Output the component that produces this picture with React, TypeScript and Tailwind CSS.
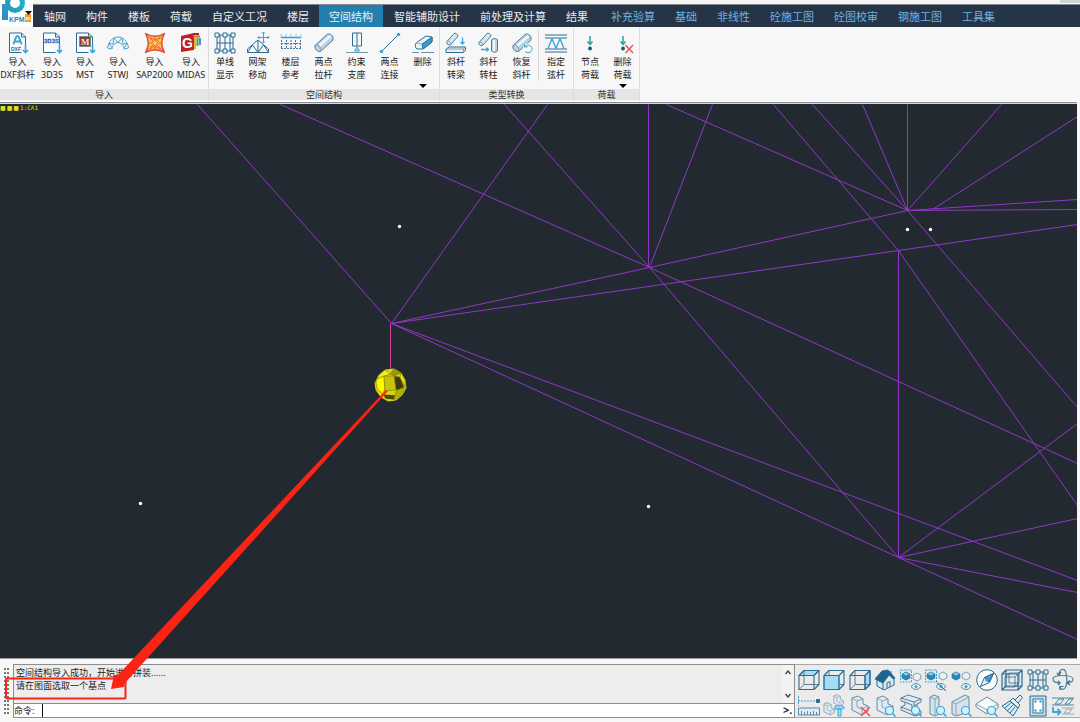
import React from 'react';

const D = '#2a6c92';
const L = '#38a5dc';
const P = '#a5dcf5';

type IconProps = { children: React.ReactNode };

function Icon({ children }: IconProps) {
  return (
    <svg viewBox="0 0 22 22" width="22" height="22" fill="none" stroke={D} strokeWidth="1" strokeLinejoin="round" aria-hidden="true" className="shrink-0 overflow-visible">
      {children}
    </svg>
  );
}

/* ---------- ribbon drawings ---------- */

function Sheet({ children }: IconProps) {
  return (
    <Icon>
      <path d="M2.500 1h12l4 4v9M14.500 20.500H2.500V1" fill="#fbfdfe" />
      <path d="M14.500 1v4h4" />
      {children}
      <path d="M18.500 12.500v8M16 18l2.500 2.700L21 18" stroke={L} strokeWidth="1.600" />
    </Icon>
  );
}

const dxf = (
  <Sheet>
    <path d="M6 12c2-1 2-8 4.500-8S13 11 15 12M8 9.500h5" stroke={L} strokeWidth="2" />
    <text x="4" y="19" fontSize="5" fontWeight="700" fill={D} stroke="none" fontFamily="Liberation Sans, sans-serif">DXF</text>
  </Sheet>
);
const threeD = (
  <Sheet>
    <rect x="3" y="6" width="15" height="6" fill="#d8e9f7" stroke="none" />
    <text x="3" y="11" fontSize="6" fontWeight="700" fill="#324f9d" stroke="none" fontFamily="Liberation Sans, sans-serif">3D3S</text>
  </Sheet>
);
const mst = (
  <Sheet>
    <rect x="5.500" y="4.500" width="11" height="10" fill="#8d3b3b" stroke="#80858a" />
    <text x="7" y="13" fontSize="9" fontWeight="700" fill="#f2e6e2" stroke="none" fontFamily="Liberation Serif, serif">M</text>
  </Sheet>
);
const stwj = (
  <Icon>
    <g stroke="#42a5d8">
      <path d="M.5 16C1.500 9 6 5 11 5s9.500 4 10.500 11" />
      <path d="M5 17c.6-4 3-6.500 6-6.500s5.400 2.500 6 6.500M.5 16 5 17M2 11.500l4 .5 1-6 4 4.500 4-4.500 1 6 4-.5M2 11.500 5 16M20 11.500 17 16M17 17l4.500-1" />
    </g>
  </Icon>
);
const sap = (
  <Icon>
    <path d="M1.500 1.500Q11 7 20.500 1.500 15 11 20.500 20.500 11 15 1.500 20.500 7 11 1.500 1.500Z" fill="#f9bf3f" stroke="#e8413a" strokeWidth="1.400" />
    <path d="m2 2 18 18M20 2 2 20M11 4v14M4 11h14M6 5q5 5 10 0M6 17q5-5 10 0" stroke="#ea5040" strokeWidth=".8" />
    <circle cx="11" cy="11" r="1.500" fill="#fce58c" stroke="none" />
  </Icon>
);
const midas = (
  <Icon>
    <path d="M1 4 14 1v17L1 20Z" fill="#c0202a" stroke="none" />
    <path d="M14 1 21 4v13l-7 1Z" fill="#f4f6f2" stroke="none" />
    <path d="M14 2h5" stroke="#a52028" strokeWidth="2" />
    <path d="M15 6v11" stroke="#e4b92f" strokeWidth="2" />
    <path d="M17.500 6v8" stroke="#4d9b57" strokeWidth="2" />
    <path d="M20 6v7" stroke="#3c6bb8" strokeWidth="1.600" />
    <path d="M13 4.500h7" stroke="#d1682c" strokeWidth="2" />
    <text x="2" y="16" fontSize="14" fontWeight="700" fill="#fff" stroke="none" fontFamily="Liberation Sans, sans-serif">G</text>
  </Icon>
);

const frameGrid = (
  <>
    <path d="M3 3h16v16H3ZM11 3v16M3 11h16M6 3v16M16 3v16" />
    {[3, 11, 19].map((x) =>
      [3, 19].map((y) => <rect key={`${x}-${y}`} x={x - 2} y={y - 2} width="4" height="4" fill="#eef6fa" />),
    )}
  </>
);

const single = <Icon>{frameGrid}</Icon>;
const truss = (
  <Icon>
    <path d="M.5 20.500h21M.5 20.500V17L11 8l10.500 9v3.500M11 8v12.500M11 20.500 5.500 13M11 20.500 16.500 13M.5 20.500l5-7.500M21.500 20.500l-5-7.500" />
    <path d="M16.500 0v11M11 5.500h11M15 1.500 16.500 0 18 1.500M15 9.500l1.500 1.500L18 9.500M12.500 4 11 5.500 12.500 7M20.500 4 22 5.500 20.500 7" stroke={L} />
  </Icon>
);
const floorRef = (
  <Icon>
    <path d="M1 5.500h20" stroke={L} strokeWidth="1.600" />
    <path d="M1 2.500v3M6 2.500v3M11 2.500v3M16 2.500v3M21 2.500v3" stroke={L} strokeDasharray="1 1" />
    <path d="M1 11.500h20M1 16.500h20M1.500 8v9M6.500 8v9M11 8v9M15.500 8v9M20.500 8v9" strokeDasharray="2 1" strokeWidth=".9" />
  </Icon>
);

function Rod() {
  return (
    <>
      <path d="M2 13.500 14 2.500c2-1.500 6 .5 6 3.500v2L8 19c-3 2-7-2-6-5.500Z" fill="#bdd2df" stroke="#4c7e9b" />
      <path d="M2 13.500c2-2 6 1 6 5.500" stroke="#7d9db1" />
      <path d="M6.500 13.500 17.500 4" stroke="#f1f7fa" strokeWidth="2.500" />
    </>
  );
}

const rod = <Icon><Rod /></Icon>;
const support = (
  <Icon>
    <path d="M6.500 1h9v13h-9ZM11 1v13" />
    <path d="M0 20.500h22" stroke="#7198ae" />
    <path d="m11 15-2.500 4h5Z" stroke={L} fill={P} />
  </Icon>
);
const connect = (
  <Icon>
    <path d="M3 19 19 3" />
    <circle cx="2.500" cy="19.500" r="1.800" fill={L} stroke="none" />
    <circle cx="19.500" cy="2.500" r="1.800" fill={L} stroke="none" />
  </Icon>
);
const eraser = (
  <Icon>
    <path d="m4 11 10-7 6 1v5l-9 7H5c-2-1-2-4-1-6Z" fill="#e9f3f8" />
    <path d="m10 12 10-7v5l-9 7Z" fill="#36a0d6" />
    <path d="m4 11 6 1" stroke="#8fb0c2" />
    <path d="M0 20.500h7M9 20.500h13" stroke="#6a8ba0" />
  </Icon>
);
const toBeam = (
  <Icon>
    <path d="M2 9.500 9 1.500c1-1 4 .5 4 2.500L6 12.500c-3 1.500-5-1-4-3Z" fill="#dbe7ee" stroke="#4c7e9b" />
    <path d="M2 9.500c2-1 4 1 4 3" stroke="#7d9db1" />
    <path d="M17.500 5.500v6M15.500 10l2 2 2-2" stroke={L} strokeWidth="1.300" />
    <path d="m1 17 3-2h16.500v3l-2 2.500H1Z" fill="#e7f0f5" />
    <path d="M1 17h17.500l2-2M18.500 17v3.500" stroke="#7d9db1" />
  </Icon>
);
const toColumn = (
  <Icon>
    <path d="M1 10.500 9 1.500c1-1 4 .5 4 2.500L5 13c-3 1.500-5-.5-4-2.500Z" fill="#dbe7ee" stroke="#4c7e9b" />
    <path d="M1 10.500c2-1 4 1 4 2.500" stroke="#7d9db1" />
    <path d="M13.500 8c1-2 6-2 6 0v10c0 3-6 3-6 0Z" fill="#bdd2df" stroke="#4c7e9b" />
    <path d="M16 8v11" stroke="#f1f7fa" strokeWidth="2" />
    <path d="M3 17.500h7M8.500 15.500l2 2-2 2" stroke={L} strokeWidth="1.300" />
  </Icon>
);
const restore = (
  <Icon>
    <Rod />
    <circle cx="17" cy="16.500" r="5" fill="#f7f7f7" stroke="none" />
    <path d="M14 14.500c3-3 7.500-.5 7 3s-5 4-7 2M13.500 12v3h3" stroke={L} />
  </Icon>
);
const chord = (
  <Icon>
    <path d="M0 3h22M0 6h22M0 17h22M0 20h22" strokeWidth="1.200" />
    <path d="m3 16.500 4-10 4 10 4-10 4 10" stroke={L} strokeWidth="1.400" />
  </Icon>
);
const nodeLoad = (
  <Icon>
    <path d="M11 4v8M8.500 9.500l2.500 3 2.500-3" stroke="#2ba1a8" strokeWidth="1.500" />
    <circle cx="11" cy="16.500" r="1.900" fill="#1d5975" stroke="none" />
  </Icon>
);
const delLoad = (
  <Icon>
    <path d="M11 4v8M8.500 9.500l2.500 3 2.500-3" stroke="#2ba1a8" strokeWidth="1.500" />
    <circle cx="11" cy="16.500" r="1.900" fill="#1d5975" stroke="none" />
    <path d="m13.500 13 7.500 8M21 13l-7.500 8" stroke="#ef5350" strokeWidth="1.500" />
  </Icon>
);

/* ---------- view toolbar drawings ---------- */

function WireCube({ face }: { face: 'top' | 'front' | 'side' }) {
  return (
    <Icon>
      {face === 'top' && <path d="M1 6.500 6 1.500h15l-5 5Z" fill={P} />}
      {face === 'side' && <path d="m16 6.500 5-5v14l-5 5Z" fill={P} />}
      <path d="M6 1.500v14h15M6 15.500l-5 5" stroke="#5c7d92" />
      {face === 'front' && <path d="M1 6.500h15v14H1Z" fill={P} stroke={L} />}
      <path d="M1 6.500h15v14H1ZM1 6.500 6 1.500h15v14l-5 5M16 6.500l5-5" strokeWidth="1.100" />
    </Icon>
  );
}

const house = (
  <Icon>
    <path d="m3 10 6 2 6-7 5 5v6l-10 5-7-4Z" fill="#dce8ef" />
    <path d="m1 10 7-8 6-1 7 8-1.500 1L15 6l-6 8Z" fill="#1d6590" />
    <path d="M9 13v8M13 19v-5l3-1.500V18M17 2v3" />
  </Icon>
);

function Eye({ off = false }: { off?: boolean }) {
  return (
    <>
      <path d="M11 17.500q5-6 10 0-5 6-10 0Z" fill="#f4f8fa" stroke="#4c82a0" />
      <circle cx="16" cy="17.500" r="1.600" fill={L} stroke="none" />
      {off && <path d="m11.500 13 9.500 9" />}
    </>
  );
}
function Hex({ x, y, solid = false }: { x: number; y: number; solid?: boolean }) {
  return (
    <g transform={`translate(${x} ${y})`}>
      <path d="M0-4 3.800-2v4L0 4l-3.800-2v-4Z" fill={solid ? '#2589bd' : '#e9f1f5'} stroke={solid ? D : '#6f98af'} strokeWidth=".9" />
      {solid && <path d="m-3.200-2 3.200 1.500L3.200-2 0-3.700Z" fill="#8bd0ef" stroke="none" />}
    </g>
  );
}
const showSel = <Icon><rect x=".5" y="1" width="11" height="12" strokeDasharray="2 1" stroke={L} /><Hex x={6} y={7} solid /><Hex x={17} y={8} /><Eye /></Icon>;
const hideSel = <Icon><rect x=".5" y="1" width="11" height="12" strokeDasharray="2 1" stroke={L} /><Hex x={6} y={7} solid /><Hex x={18} y={7} /><Eye off /></Icon>;
const showAll = <Icon><Hex x={6} y={7} solid /><Hex x={16} y={7} /><Eye /></Icon>;
const compass = (
  <Icon>
    <circle cx="11" cy="11" r="10.300" fill="#fcfdfe" />
    <path d="m17.500 4.500-4 9-9 4 4-9Z" fill="#e7f3f9" />
    <path d="m17.500 4.500-9 4L13 13Z" fill={L} />
    <circle cx="11" cy="11" r="1.200" fill="#fff" />
  </Icon>
);
const doubleCube = (
  <Icon>
    <path d="M1 5 5 1h16v16l-4 4H1ZM1 5h16v16M17 5l4-4M5 1v16h16M5 17l-4 4" strokeWidth="1.200" />
    <path d="M4 8h10v10H4ZM8 4h10v10H8ZM4 8l4-4M14 8l4-4M14 18l4-4" strokeWidth=".8" />
  </Icon>
);
const orbit = (
  <Icon>
    <path d="M7 5c1-6 6-6 7-1 1 5 1 12-1 15-2 2.500-5 1-5-1" stroke="#4f7d97" strokeWidth="1.200" />
    <path d="M8 14c-4 0-7-1-7-4s5-3.500 9-3.500 11 0 11 4c0 2-2 3-6 3.300" stroke="#4f7d97" strokeWidth="1.200" />
    <path d="m5 4 2 2 2-3M8 21v-3.500h3.500M18 11.500l-3 2.300 3 2.200M6 12l2 2-2 2" strokeWidth="1.200" />
  </Icon>
);
const ruler = (
  <Icon>
    <path d="M.5 1v10M0 6h17" stroke={L} strokeDasharray="2 1" />
    <rect x="18.500" y="4.500" width="3" height="3" fill={D} />
    <path d="M.5 13h21v7H.5Z" fill="#ddebf3" stroke="#5b8ba6" />
    <path d="M3.500 16v4M6.500 17v3M9.500 16v4M12.500 17v3M15.500 16v4M18.500 17v3" stroke="#5b8ba6" />
  </Icon>
);
const block = <path d="m3 3 6-2 5 3v5l5 2v5l-6 4-10-5Z" fill="#e1eaf0" stroke="#6b8a9d" />;
const blockLines = <path d="m3 3 5 3 6-2M8 6v6l5 2 6-3M13 14v6" stroke="#8aa4b3" />;
function Lens() {
  return (
    <>
      <circle cx="15.500" cy="15.500" r="4" fill="#d5f1fc" stroke={L} strokeWidth="1.200" />
      <path d="m18.500 18.500 3 3" stroke={L} strokeWidth="1.500" />
    </>
  );
}
const paint = (
  <Icon>
    <g transform="translate(9 -1) scale(.6)">{block}{blockLines}</g>
    <g transform="translate(-1 7) scale(.65)">{block}{blockLines}</g>
    <path d="M12 11h8l1.500 2.500M12 11v3h8v-3M15 14h3v7h-3Z" stroke={L} fill={P} />
  </Icon>
);
const blockDel = <Icon>{block}{blockLines}<path d="m12 12 9 9M21 12l-9 9" stroke="#ef5350" strokeWidth="1.500" /></Icon>;
const blockFind = <Icon>{block}{blockLines}<Lens /></Icon>;
const beamFind = (
  <Icon>
    <path d="m1 3 7-3 13 4v3l-4 2v5l4 2v3l-6 2-14-6v-3l4-2V7L1 6Z" fill="#dfe9ef" stroke="#55809a" />
    <path d="m1 3 13 4 7-3M14 7v4l3-2M5 7l7 3v6M1 12l13 5v4" stroke="#55809a" />
    <Lens />
  </Icon>
);
const colFind = (
  <Icon>
    <path d="m5 2 4-2 5 2v17l-4 2-5-2Z" fill="#d6e3eb" stroke="#6b8a9d" />
    <path d="m5 2 5 2 4-2M10 4v17" stroke="#8aa4b3" />
    <Lens />
  </Icon>
);
const wallFind = (
  <Icon>
    <path d="M2 7 15 0l4 2v15L6 21l-4-2Z" fill="#d6e3eb" stroke="#6b8a9d" />
    <path d="m2 7 4 2 13-7M6 9v12" stroke="#8aa4b3" />
    <Lens />
  </Icon>
);
const slabFind = (
  <Icon>
    <path d="M0 9 11 2l11 7v4l-11 6L0 12Z" fill="#f4f8fa" stroke="#6b8a9d" />
    <path d="m0 9 11 6 11-6M11 15v4" stroke="#8aa4b3" />
    <Lens />
  </Icon>
);
const brush = (
  <Icon>
    <path d="m1 11 8-5 8 7-5 8Z" fill="#d5effa" />
    <path d="m9 6 3-3 7 7-2 3ZM14 5l5-5 2.500 2.500L17 8M4 13l7-6M6 16l6-6M9 18l5-6" />
  </Icon>
);
const plate = (
  <Icon>
    <path d="M3 1h16v20H3Z" fill="#c7dfec" />
    <path d="M6 4h10v14H6Z" fill="#fff" />
    {[8.5, 13.5].map((x) => [6.5, 15.5].map((y) => <circle key={`${x}-${y}`} cx={x} cy={y} r="1.200" fill={L} stroke="none" />))}
  </Icon>
);
const swap = (
  <Icon>
    <path d="M0 3h22M0 10h22M3 9l4-5h5L8 9ZM13 9l4-5h4l-4 5Z" stroke="#4287a8" />
    <path d="M10 13h12M10 19h12M12 18l3-4h5l-3 4Z" stroke="#9aa9b3" />
    <path d="M1 12v5h7M5.500 14l3 3-3 3" stroke={L} strokeWidth="1.800" />
  </Icon>
);

/* ---------- data ---------- */

type Tool = { id: string; icon: React.ReactNode; top: string; bottom?: string; width: string; more?: boolean; lead?: boolean };
type Group = { label: string; tools: Tool[] };

const groups: Group[] = [
  {
    label: '导入',
    tools: [
      { id: 'dxf', icon: dxf, top: '导入', bottom: 'DXF斜杆', width: 'w-[35px]' },
      { id: '3d3s', icon: threeD, top: '导入', bottom: '3D3S', width: 'w-[34px]' },
      { id: 'mst', icon: mst, top: '导入', bottom: 'MST', width: 'w-[32px]' },
      { id: 'stwj', icon: stwj, top: '导入', bottom: 'STWJ', width: 'w-[34px]' },
      { id: 'sap', icon: sap, top: '导入', bottom: 'SAP2000', width: 'w-[39px]' },
      { id: 'midas', icon: midas, top: '导入', bottom: 'MIDAS', width: 'w-[34px]' },
    ],
  },
  {
    label: '空间结构',
    tools: [
      { id: 'single', icon: single, top: '单线', bottom: '显示', width: 'w-[32px]' },
      { id: 'truss', icon: truss, top: '网架', bottom: '移动', width: 'w-[33px]' },
      { id: 'floor', icon: floorRef, top: '楼层', bottom: '参考', width: 'w-[33px]' },
      { id: 'rod', icon: rod, top: '两点', bottom: '拉杆', width: 'w-[33px]' },
      { id: 'support', icon: support, top: '约束', bottom: '支座', width: 'w-[33px]' },
      { id: 'connect', icon: connect, top: '两点', bottom: '连接', width: 'w-[33px]' },
      { id: 'erase', icon: eraser, top: '删除', width: 'w-[33px]', more: true },
    ],
  },
  {
    label: '类型转换',
    tools: [
      { id: 'beam', icon: toBeam, top: '斜杆', bottom: '转梁', width: 'w-[32px]' },
      { id: 'column', icon: toColumn, top: '斜杆', bottom: '转柱', width: 'w-[33px]' },
      { id: 'restore', icon: restore, top: '恢复', bottom: '斜杆', width: 'w-[33px]' },
      { id: 'chord', icon: chord, top: '指定', bottom: '弦杆', width: 'w-[34px]', lead: true },
    ],
  },
  {
    label: '荷载',
    tools: [
      { id: 'node', icon: nodeLoad, top: '节点', bottom: '荷载', width: 'w-[32px]' },
      { id: 'delload', icon: delLoad, top: '删除', bottom: '荷载', width: 'w-[33px]', more: true },
    ],
  },
];

const mainTabs = ['轴网', '构件', '楼板', '荷载', '自定义工况', '楼层', '空间结构'];
const analysisTabs = ['智能辅助设计', '前处理及计算', '结果'];
const extraTabs = ['补充验算', '基础', '非线性', '砼施工图', '砼图校审', '钢施工图', '工具集'];

const viewTools: { label: string; icon: React.ReactNode }[] = [
  { label: '俯视图', icon: <WireCube face="top" /> },
  { label: '前视图', icon: <WireCube face="front" /> },
  { label: '侧视图', icon: <WireCube face="side" /> },
  { label: '主视图', icon: house },
  { label: '显示选中', icon: showSel },
  { label: '隐藏选中', icon: hideSel },
  { label: '全部显示', icon: showAll },
  { label: '导航', icon: compass },
  { label: '线框', icon: doubleCube },
  { label: '单线图', icon: <Icon>{frameGrid}</Icon> },
  { label: '旋转', icon: orbit },
  { label: '测量', icon: ruler },
  { label: '替换', icon: paint },
  { label: '删除构件', icon: blockDel },
  { label: '查找节点', icon: blockFind },
  { label: '查找梁', icon: beamFind },
  { label: '查找柱', icon: colFind },
  { label: '查找墙', icon: wallFind },
  { label: '查找板', icon: slabFind },
  { label: '清理', icon: brush },
  { label: '连接板', icon: plate },
  { label: '切换', icon: swap },
];

const members: [number, number, number, number][] = [
  [197, 104, 391, 323],
  [547, 104, 391, 323],
  [280, 104, 649, 267],
  [649, 267, 1077, 463],
  [504, 104, 649, 267],
  [649, 267, 898, 557],
  [648, 104, 648, 267],
  [712, 104, 649, 267],
  [391, 323, 649, 267],
  [649, 267, 907, 210],
  [391, 323, 898, 250],
  [898, 250, 1077, 224],
  [391, 323, 898, 557],
  [391, 323, 1077, 580],
  [666, 104, 907, 210],
  [812, 104, 907, 210],
  [773, 104, 898, 250],
  [898, 250, 1077, 505],
  [862, 104, 907, 210],
  [907, 104, 907, 210],
  [1001, 104, 907, 210],
  [1077, 116, 932, 209],
  [907, 210, 1077, 209],
  [907, 210, 1077, 199],
  [907, 210, 1077, 407],
  [898, 250, 898, 557],
  [898, 557, 1077, 423],
  [898, 557, 1077, 518],
  [898, 557, 1077, 592],
  [898, 557, 1077, 639],
];

const points: [number, number][] = [[399, 226], [140, 503], [648, 506], [907, 229], [930, 229]];

/* ---------- layout ---------- */

function ToolButton({ tool }: { tool: Tool }) {
  return (
    <>
      {tool.lead && <span className="mt-[3px] h-[51px] w-px shrink-0 bg-[#d5d5d5]" />}
      <button type="button" className={`flex h-full shrink-0 flex-col items-center pt-[5px] ${tool.width}`}>
        {tool.icon}
        <span className="mt-px text-[9px] leading-[13px] whitespace-nowrap text-[#222]">{tool.top}</span>
        <span className="h-[13px] text-[9px] leading-[13px] whitespace-nowrap text-[#222]">{tool.bottom}</span>
        {tool.more && (
          <svg viewBox="0 0 8 4" width="8" height="4" className="mt-[3px]" aria-hidden="true">
            <path d="M0 0h8L4 4Z" fill="#000" />
          </svg>
        )}
      </button>
    </>
  );
}

function Logo() {
  return (
    <svg viewBox="0 0 33 27" width="33" height="27" className="absolute top-0 left-0 bg-white" aria-label="PKPM">
      <defs>
        <linearGradient id="mark" gradientUnits="userSpaceOnUse" x1="2" x2="24" y1="20" y2="0">
          <stop offset="0" stopColor="#3187c4" />
          <stop offset="1" stopColor="#1fb4c6" />
        </linearGradient>
      </defs>
      <circle cx="15" cy="3" r="7.500" fill="none" stroke="url(#mark)" strokeWidth="5" />
      <rect x="2" y="4" width="6" height="16" fill="url(#mark)" />
      <rect x="9" y="14" width="16" height="9" fill="#fff" />
      <rect x="25" y="14" width="6" height="8" fill="#f09a35" />
      <text x="9" y="22" fontSize="7" fontWeight="700" fill="#2584c4" fontFamily="Liberation Sans, sans-serif">KPM</text>
      <text x="25" y="20" fontSize="4" fontWeight="700" fill="#fff" fontFamily="Liberation Sans, sans-serif">3D</text>
      <path d="M25 11h7l-3.500 4Z" fill="#111" />
    </svg>
  );
}

export default function App() {
  return (
    <div className="relative flex h-screen flex-col overflow-hidden bg-[#f7f7f7] font-['Noto_Sans','Noto_Sans_CJK_SC',sans-serif]">
      <header className="relative shrink-0">
        <div className="flex h-[5px] justify-end border-b border-[#85898d] bg-[#f5f5f5]">
          <span className="h-[3px] w-5 bg-[#d0d2d5]" />
        </div>
        <nav className="flex h-[22px] gap-px bg-[#263447] pl-[34px] text-[11px] leading-[24px] whitespace-nowrap">
          <div className="flex">
            {mainTabs.map((t) => (
              <button key={t} type="button" className={t === '空间结构' ? 'bg-[#247fae] px-[10px] text-[#e3f2fa]' : 'px-[10px] text-[#e8ebee]'}>
                {t}
              </button>
            ))}
          </div>
          <div className="flex">
            {analysisTabs.map((t) => (
              <button key={t} type="button" className="px-[10px] text-[#e8ebee]">{t}</button>
            ))}
          </div>
          <div className="ml-[2px] flex">
            {extraTabs.map((t) => (
              <button key={t} type="button" className="px-[10px] text-[#6cb4e4]">{t}</button>
            ))}
          </div>
        </nav>
        <Logo />
      </header>

      <section className="flex h-[75px] shrink-0 border-b border-[#fff] bg-[#f7f7f7]">
        {groups.map((g) => (
          <div key={g.label} className="flex shrink-0 flex-col border-r border-[#dcdcdc]">
            <div className="flex h-[62px]">
              {g.tools.map((t) => <ToolButton key={t.id} tool={t} />)}
            </div>
            <div className="h-[11px] bg-[#e5e5e5] text-center text-[9px] leading-[11px] text-[#333]">{g.label}</div>
          </div>
        ))}
      </section>

      <main className="mr-[3px] min-h-0 flex-1 border-t border-b border-t-[#888b8e] border-b-[#9b9ea1] bg-[#d9dadb] pt-px">
        <div className="relative h-full bg-[#232930]">
          <svg viewBox="0 104 1077 554" preserveAspectRatio="xMinYMin slice" className="block h-full w-full" aria-label="空间结构模型">
            <g transform="translate(.5 .5)" stroke="#9038c4" strokeWidth="1">
              {members.map(([x1, y1, x2, y2], i) => <line key={i} x1={x1} y1={y1} x2={x2} y2={y2} />)}
              <line x1="390" y1="323" x2="390" y2="372" stroke="#cf4695" />
            </g>
            {points.map(([x, y]) => <circle key={`${x}-${y}`} cx={x + 0.5} cy={y + 0.5} r="1.700" fill="#fff" />)}
            <g stroke="#8a870a" strokeWidth=".7">
              <path d="m385 370 9-1 7 4 4 7 1 8-4 7-6 5-8 1-7-4-5-7-1-7 4-8Z" fill="#d8d50a" stroke="#f2ef15" />
              <path d="m385 370 5 4-8 3-5 5-2 1 4-8Z" fill="#f3f114" />
              <path d="m390 374 4-5 7 4-7 3Z" fill="#99960b" />
              <path d="m377 379 7-3 1 12-2 6-6-5-1-7Z" fill="#fff900" />
              <path d="m384 376 10 0 2 14-11 1Z" fill="#c7c30a" />
              <path d="m394 376 6 1 4 10-3 3-5 0Z" fill="#3c3906" stroke="#98940b" />
              <path d="m383 394 13 1-2 5-9-1Z" fill="#4a4706" stroke="#e8e514" />
              <path d="m396 391 6-3 3 0-4 7-7 5Z" fill="#b4b00a" />
              <path d="m401 373 4 7 0 7-5-10Z" fill="#e9e615" />
            </g>
          </svg>
          <div className="absolute top-0 left-0 flex gap-px text-[6px] leading-[7px] whitespace-nowrap text-[#dede1c] font-['DejaVu_Sans',sans-serif]">
            <span>■</span>
            <span>■</span>
            <span>■</span>
            <span className="font-['DejaVu_Sans_Mono',monospace]">1:CA1</span>
          </div>
        </div>
      </main>

      <footer className="flex h-[63px] shrink-0 pt-[5px] pb-[4px]">
        <div className="flex w-[13px] shrink-0 items-center justify-center gap-px">
          <span className="h-[46px] border-l-2 border-dotted border-[#777]" />
          <span className="h-[46px] border-l-2 border-dotted border-[#777]" />
        </div>
        <div className="flex min-w-0 flex-1 flex-col border border-[#8d8d8d] text-[9px] text-[#222]">
          <div className="flex min-h-0 flex-1 bg-[#ededed]">
            <div className="flex-1 pl-[2px] leading-[13px]">
              <p className="pt-px">空间结构导入成功，开始进行拼装......</p>
              <p>请在图面选取一个基点</p>
            </div>
            <div className="flex w-[13px] flex-col items-center justify-between bg-[#f2f2f2] py-[5px]">
              <svg viewBox="0 0 6 5" width="6" height="5" aria-hidden="true"><path d="M.5 4 3 1l2.500 3" fill="none" stroke="#444" strokeWidth="1.400" /></svg>
              <svg viewBox="0 0 6 5" width="6" height="5" aria-hidden="true"><path d="M.5 1 3 4l2.500-3" fill="none" stroke="#444" strokeWidth="1.400" /></svg>
            </div>
          </div>
          <div className="flex h-[14px] border-t border-[#8d8d8d] bg-white leading-[14px]">
            <label htmlFor="cmd" className="w-[29px] border-r border-[#111]">命令:</label>
            <input id="cmd" type="text" className="min-w-0 flex-1 px-1 outline-none" />
            <span className="w-[11px] text-[11px] leading-[11px] font-bold whitespace-nowrap">&gt;.</span>
          </div>
        </div>
        <div className="grid w-[285px] shrink-0 grid-cols-11 content-start gap-y-[4px] border-t border-b border-[#a9a9a9] bg-[#ebebeb] pt-[4px] pr-[4px] pl-[1px]">
          {viewTools.map((v) => (
            <button key={v.label} type="button" aria-label={v.label} className="flex h-[22px] items-center justify-center">
              {v.icon}
            </button>
          ))}
        </div>
      </footer>

      <svg viewBox="0 0 1080 722" preserveAspectRatio="xMinYMax meet" className="pointer-events-none absolute inset-0 h-full w-full" aria-hidden="true">
        <rect x="6" y="678.500" width="119.500" height="20" rx="1" fill="none" stroke="#fb2314" strokeWidth="2" />
        <path d="m386 390 1.500 1.500L125 683l-1 4-13 2 3-14 4 0Z" fill="#fb2314" />
      </svg>
    </div>
  );
}
